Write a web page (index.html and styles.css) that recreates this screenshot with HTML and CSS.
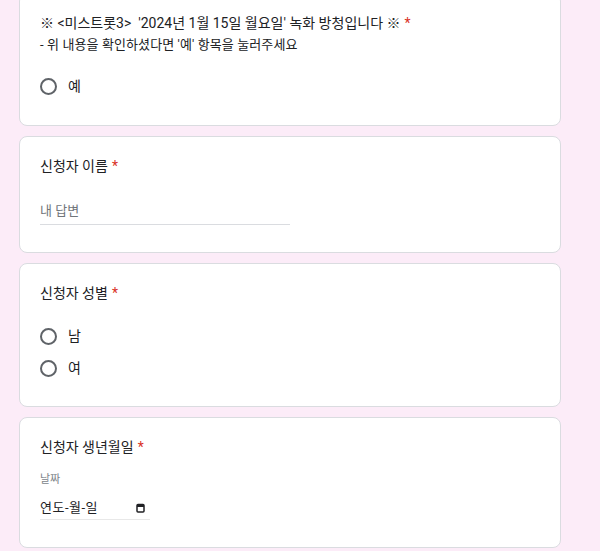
FILE: index.html
```html
<!DOCTYPE html>
<html lang="ko">
<head>
<meta charset="utf-8">
<link rel="stylesheet" href="styles.css">
</head>
<body>
<div class="form">
  <div class="card card-first">
    <div class="title">※ &lt;미스트롯3&gt;&nbsp; '2024년 1월 15일 월요일' 녹화 방청입니다 ※<span class="req">*</span></div>
    <div class="desc">- 위 내용을 확인하셨다면 '예' 항목을 눌러주세요</div>
    <div class="options">
      <div class="option"><span class="radio"></span><span class="label">예</span></div>
    </div>
  </div>

  <div class="card">
    <div class="title">신청자 이름<span class="req">*</span></div>
    <div class="text-input">내 답변</div>
  </div>

  <div class="card card-gender">
    <div class="title">신청자 성별<span class="req">*</span></div>
    <div class="options">
      <div class="option"><span class="radio"></span><span class="label">남</span></div>
      <div class="option"><span class="radio"></span><span class="label">여</span></div>
    </div>
  </div>

  <div class="card">
    <div class="title">신청자 생년월일<span class="req">*</span></div>
    <div class="date-label">날짜</div>
    <div class="date-input">
      <span class="date-text">연도-월-일</span>
      <svg class="cal" width="9" height="10" viewBox="0 0 9 10"><rect x="1" y="1.5" width="7" height="7.5" rx="1" fill="none" stroke="#202124" stroke-width="1.5"/><rect x="1" y="1.5" width="7" height="2.5" fill="#202124"/></svg>
    </div>
  </div>
</div>
</body>
</html>
```

FILE: styles.css
```css
html, body {
  margin: 0;
  padding: 0;
  background: #fcecf8;
  overflow: hidden;
}
body {
  font-family: Roboto, "Noto Sans CJK KR", sans-serif;
  color: #202124;
}
.form {
  width: 542px;
  margin-left: 19px;
  margin-top: -7px;
  display: flex;
  flex-direction: column;
  gap: 10px;
}
.card {
  box-sizing: border-box;
  background: #fff;
  border: 1px solid #dadce0;
  border-radius: 8px;
  padding: 17px 20px 27px;
}
.title {
  font-size: 14px;
  line-height: 24px;
}
.req {
  color: #d93025;
  margin-left: 4px;
}
.desc {
  font-size: 13px;
  line-height: 20px;
  letter-spacing: 0.1px;
}
.options {
  margin-top: 15px;
  display: flex;
  flex-direction: column;
}
.card-first {
  padding-bottom: 23px;
}
.card-gender {
  padding-bottom: 22px;
}
.option {
  height: 32px;
  display: flex;
  align-items: center;
}
.radio {
  box-sizing: border-box;
  width: 17px;
  height: 17px;
  border: 2px solid #5f6368;
  border-radius: 50%;
  margin-right: 11px;
  flex: none;
}
.label {
  font-size: 14px;
  line-height: 20px;
}
.text-input {
  margin-top: 21px;
  width: 250px;
  height: 24px;
  line-height: 24px;
  font-size: 13px;
  color: #70757a;
  border-bottom: 1px solid #dadce0;
  padding-bottom: 1px;
}
.date-label {
  margin-top: 12px;
  font-size: 11px;
  line-height: 18px;
  color: #80868b;
}
.date-input {
  margin-top: 7px;
  width: 105px;
  height: 23px;
  border-bottom: 1px solid #e8e8e8;
  display: flex;
  align-items: center;
  justify-content: space-between;
  padding-right: 5px;
  box-sizing: content-box;
}
.date-text {
  font-size: 13px;
  line-height: 22px;
  letter-spacing: 0.5px;
}
.cal { flex: none; }
```
